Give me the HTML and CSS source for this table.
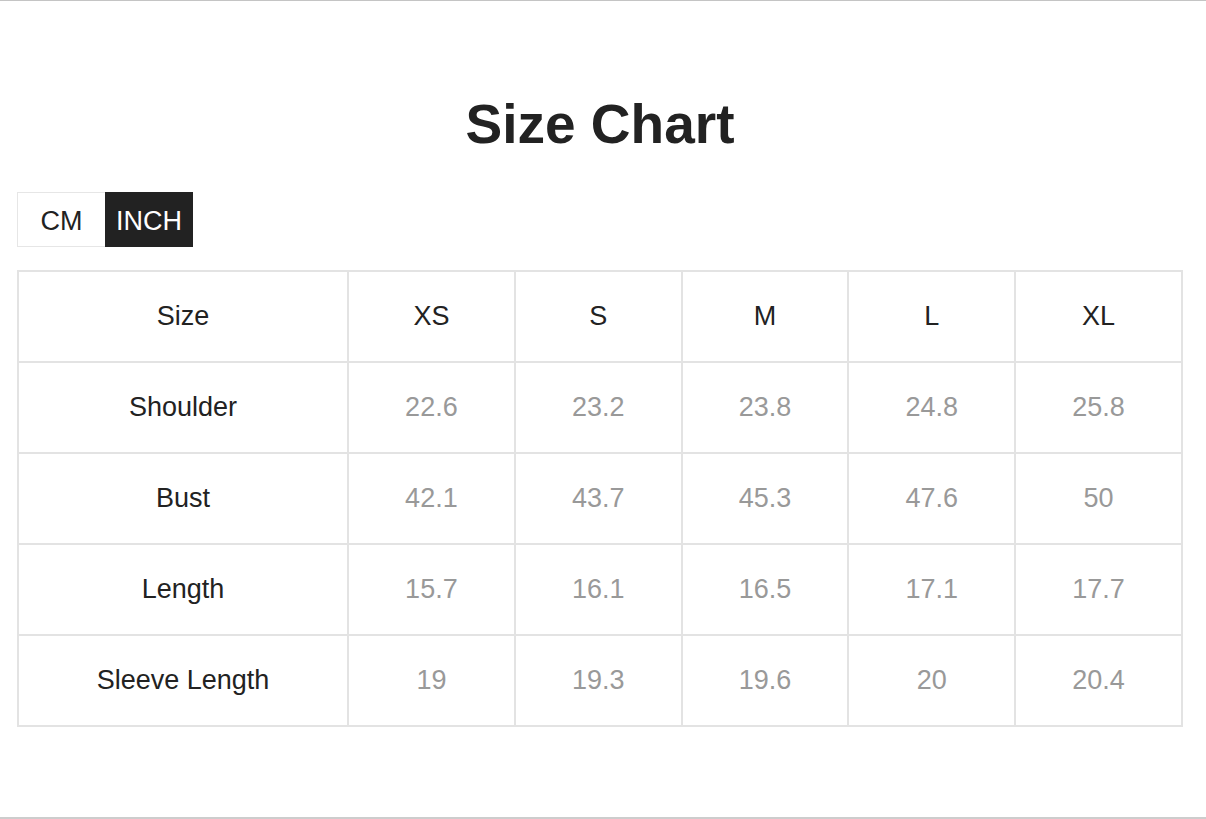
FILE: index.html
```html
<!DOCTYPE html>
<html lang="en">
<head>
<meta charset="utf-8">
<title>Size Chart</title>
<link rel="stylesheet" href="styles.css">
</head>
<body>
<div class="page">
  <div class="content">
    <h1 class="title">Size Chart</h1>
    <div class="units">
      <span class="unit">CM</span>
      <span class="unit active">INCH</span>
    </div>
    <table class="chart">
      <tr class="head">
        <td class="label">Size</td><td>XS</td><td>S</td><td>M</td><td>L</td><td>XL</td>
      </tr>
      <tr>
        <td class="label">Shoulder</td><td>22.6</td><td>23.2</td><td>23.8</td><td>24.8</td><td>25.8</td>
      </tr>
      <tr>
        <td class="label">Bust</td><td>42.1</td><td>43.7</td><td>45.3</td><td>47.6</td><td>50</td>
      </tr>
      <tr>
        <td class="label">Length</td><td>15.7</td><td>16.1</td><td>16.5</td><td>17.1</td><td>17.7</td>
      </tr>
      <tr>
        <td class="label">Sleeve Length</td><td>19</td><td>19.3</td><td>19.6</td><td>20</td><td>20.4</td>
      </tr>
    </table>
  </div>
</div>
</body>
</html>
```
FILE: styles.css
```css
html, body {
  margin: 0;
  padding: 0;
  background: #fff;
}
body {
  font-family: "Liberation Sans", Arial, sans-serif;
  color: #222;
}
.page {
  height: 819px;
  box-sizing: border-box;
  border-top: 1px solid #c4c4c4;
  border-bottom: 2px solid #cdcdcd;
  overflow: hidden;
}
.content {
  width: 1166px;
  margin-left: 17px;
}
.title {
  margin: 91px 0 0;
  height: 100px;
  font-size: 55px;
  line-height: 64px;
  font-weight: bold;
  text-align: center;
  color: #222;
}
.units {
  display: inline-flex;
  border: 1px solid #e6e6e6;
  height: 53px;
}
.unit {
  width: 87px;
  display: flex;
  align-items: center;
  justify-content: center;
  padding-top: 4px;
  box-sizing: border-box;
  font-size: 27px;
  color: #222;
}
.unit.active {
  background: #222;
  color: #fff;
  margin: -1px -1px -1px 0;
  height: 55px;
  width: 88px;
}
.chart {
  margin-top: 23px;
  width: 1166px;
  border-collapse: collapse;
  table-layout: fixed;
}
.chart td {
  border: 2px solid #e3e3e3;
  height: 89px;
  padding: 0;
  text-align: center;
  vertical-align: middle;
  font-size: 27px;
  color: #999;
}
.chart td.label {
  width: 328px;
  color: #222;
}
.chart tr.head td {
  color: #222;
}
```
